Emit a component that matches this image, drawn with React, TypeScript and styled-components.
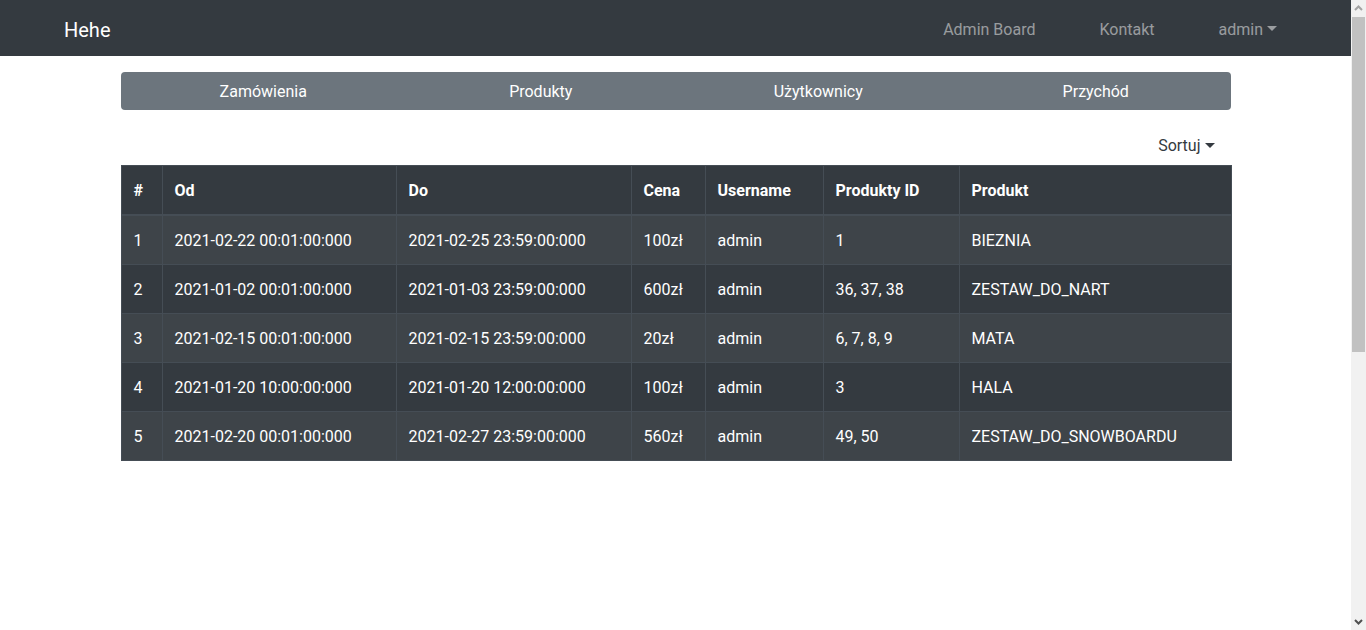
import React from 'react';
import styled, { createGlobalStyle } from 'styled-components';

const GlobalStyle = createGlobalStyle`
  body {
    margin: 0;
    background: #fff;
    font-family: Roboto, "Liberation Sans", sans-serif;
    font-size: 16px;
    line-height: 1.5;
    color: #212529;
  }
  * {
    box-sizing: border-box;
  }
`;

// page area next to the browser scrollbar
const Page = styled.div`
  width: calc(100% - 15px);
`;

const Scrollbar = styled.div`
  position: fixed;
  top: 0;
  right: 0;
  bottom: 0;
  width: 15px;
  background: #f1f1f1;
  display: flex;
  flex-direction: column;
  align-items: center;
  justify-content: space-between;
`;

const ScrollArrow = styled.svg`
  width: 15px;
  height: 17px;
  flex-shrink: 0;
`;

const Thumb = styled.div`
  position: absolute;
  top: 17px;
  left: 1px;
  width: 13px;
  height: 335px;
  background: #c1c1c1;
`;

const Navbar = styled.nav`
  height: 56px;
  background-color: #343a40;
  display: flex;
  align-items: center;
  justify-content: space-between;
  padding: 3px 42px 0 64px;
`;

const Brand = styled.a`
  color: #fff;
  font-size: 20px;
  line-height: 30px;
  text-decoration: none;
`;

const NavList = styled.div`
  display: flex;
  align-items: center;
`;

const NavLink = styled.a`
  color: rgba(255, 255, 255, 0.5);
  padding: 8px;
  margin: 0 24px;
  text-decoration: none;
  display: flex;
  align-items: center;
`;

const Caret = styled.span<{ $color?: string }>`
  display: inline-block;
  margin-left: 4px;
  margin-top: -2px;
  border-top: 5px solid ${(p) => p.$color || 'currentColor'};
  border-left: 5px solid transparent;
  border-right: 5px solid transparent;
`;

const Container = styled.main`
  width: 1110px;
  margin: 0 auto;
`;

const Tabs = styled.div`
  margin-top: 16px;
  height: 38px;
  display: flex;
  background-color: #6c757d;
  border-radius: 4px;
`;

const Tab = styled.button`
  flex: 1;
  border: 0;
  background: transparent;
  color: #fff;
  font: inherit;
  padding: 2px 0 0 8px;
  cursor: pointer;
`;

const SortRow = styled.div`
  display: flex;
  justify-content: flex-end;
  margin-top: 16px;
  padding-right: 4px;
`;

const SortButton = styled.button`
  height: 38px;
  border: 0;
  background: transparent;
  font: inherit;
  color: #343a40;
  padding: 2px 12px 0;
  display: flex;
  align-items: center;
`;

const Table = styled.table`
  width: 100%;
  margin-top: 1px;
  border-collapse: collapse;
  background-color: #343a40;
  color: #fff;
  border: 1px solid #454d55;
  table-layout: fixed;
`;

const Th = styled.th`
  text-align: left;
  font-weight: 700;
  padding: 13px 12px 11px;
  border: 1px solid #454d55;
  border-bottom-width: 2px;
`;

const Tr = styled.tr`
  &:nth-child(odd) {
    background-color: rgba(255, 255, 255, 0.05);
  }
`;

const Td = styled.td`
  padding: 13px 12px 11px;
  border: 1px solid #454d55;
  white-space: nowrap;
`;

const columns = [
  { label: '#', width: 41 },
  { label: 'Od', width: 234 },
  { label: 'Do', width: 235 },
  { label: 'Cena', width: 74 },
  { label: 'Username', width: 118 },
  { label: 'Produkty ID', width: 136 },
  { label: 'Produkt', width: 272 },
];

const orders = [
  ['1', '2021-02-22 00:01:00:000', '2021-02-25 23:59:00:000', '100zł', 'admin', '1', 'BIEZNIA'],
  ['2', '2021-01-02 00:01:00:000', '2021-01-03 23:59:00:000', '600zł', 'admin', '36, 37, 38', 'ZESTAW_DO_NART'],
  ['3', '2021-02-15 00:01:00:000', '2021-02-15 23:59:00:000', '20zł', 'admin', '6, 7, 8, 9', 'MATA'],
  ['4', '2021-01-20 10:00:00:000', '2021-01-20 12:00:00:000', '100zł', 'admin', '3', 'HALA'],
  ['5', '2021-02-20 00:01:00:000', '2021-02-27 23:59:00:000', '560zł', 'admin', '49, 50', 'ZESTAW_DO_SNOWBOARDU'],
];

const App = () => {
  return (
    <>
      <GlobalStyle />
      <Page>
        <Navbar>
          <Brand href="#">Hehe</Brand>
          <NavList>
            <NavLink href="#">Admin Board</NavLink>
            <NavLink href="#">Kontakt</NavLink>
            <NavLink href="#">
              admin
              <Caret />
            </NavLink>
          </NavList>
        </Navbar>
        <Container>
          <Tabs>
            <Tab>Zamówienia</Tab>
            <Tab>Produkty</Tab>
            <Tab>Użytkownicy</Tab>
            <Tab>Przychód</Tab>
          </Tabs>
          <SortRow>
            <SortButton>
              Sortuj
              <Caret $color="#343a40" />
            </SortButton>
          </SortRow>
          <Table>
            <colgroup>
              {columns.map((c) => (
                <col key={c.label} style={{ width: c.width }} />
              ))}
            </colgroup>
            <thead>
              <tr>
                {columns.map((c) => (
                  <Th key={c.label}>{c.label}</Th>
                ))}
              </tr>
            </thead>
            <tbody>
              {orders.map((row) => (
                <Tr key={row[0]}>
                  {row.map((cell, i) => (
                    <Td key={i}>{cell}</Td>
                  ))}
                </Tr>
              ))}
            </tbody>
          </Table>
        </Container>
      </Page>
      <Scrollbar>
        <ScrollArrow viewBox="0 0 15 17">
          <path d="M4 10 L7.5 6.5 L11 10" fill="none" stroke="#a3a3a3" strokeWidth="2" />
        </ScrollArrow>
        <Thumb />
        <ScrollArrow viewBox="0 0 15 17">
          <path d="M4 7 L7.5 10.5 L11 7" fill="none" stroke="#505050" strokeWidth="2" />
        </ScrollArrow>
      </Scrollbar>
    </>
  );
};

export default App;
